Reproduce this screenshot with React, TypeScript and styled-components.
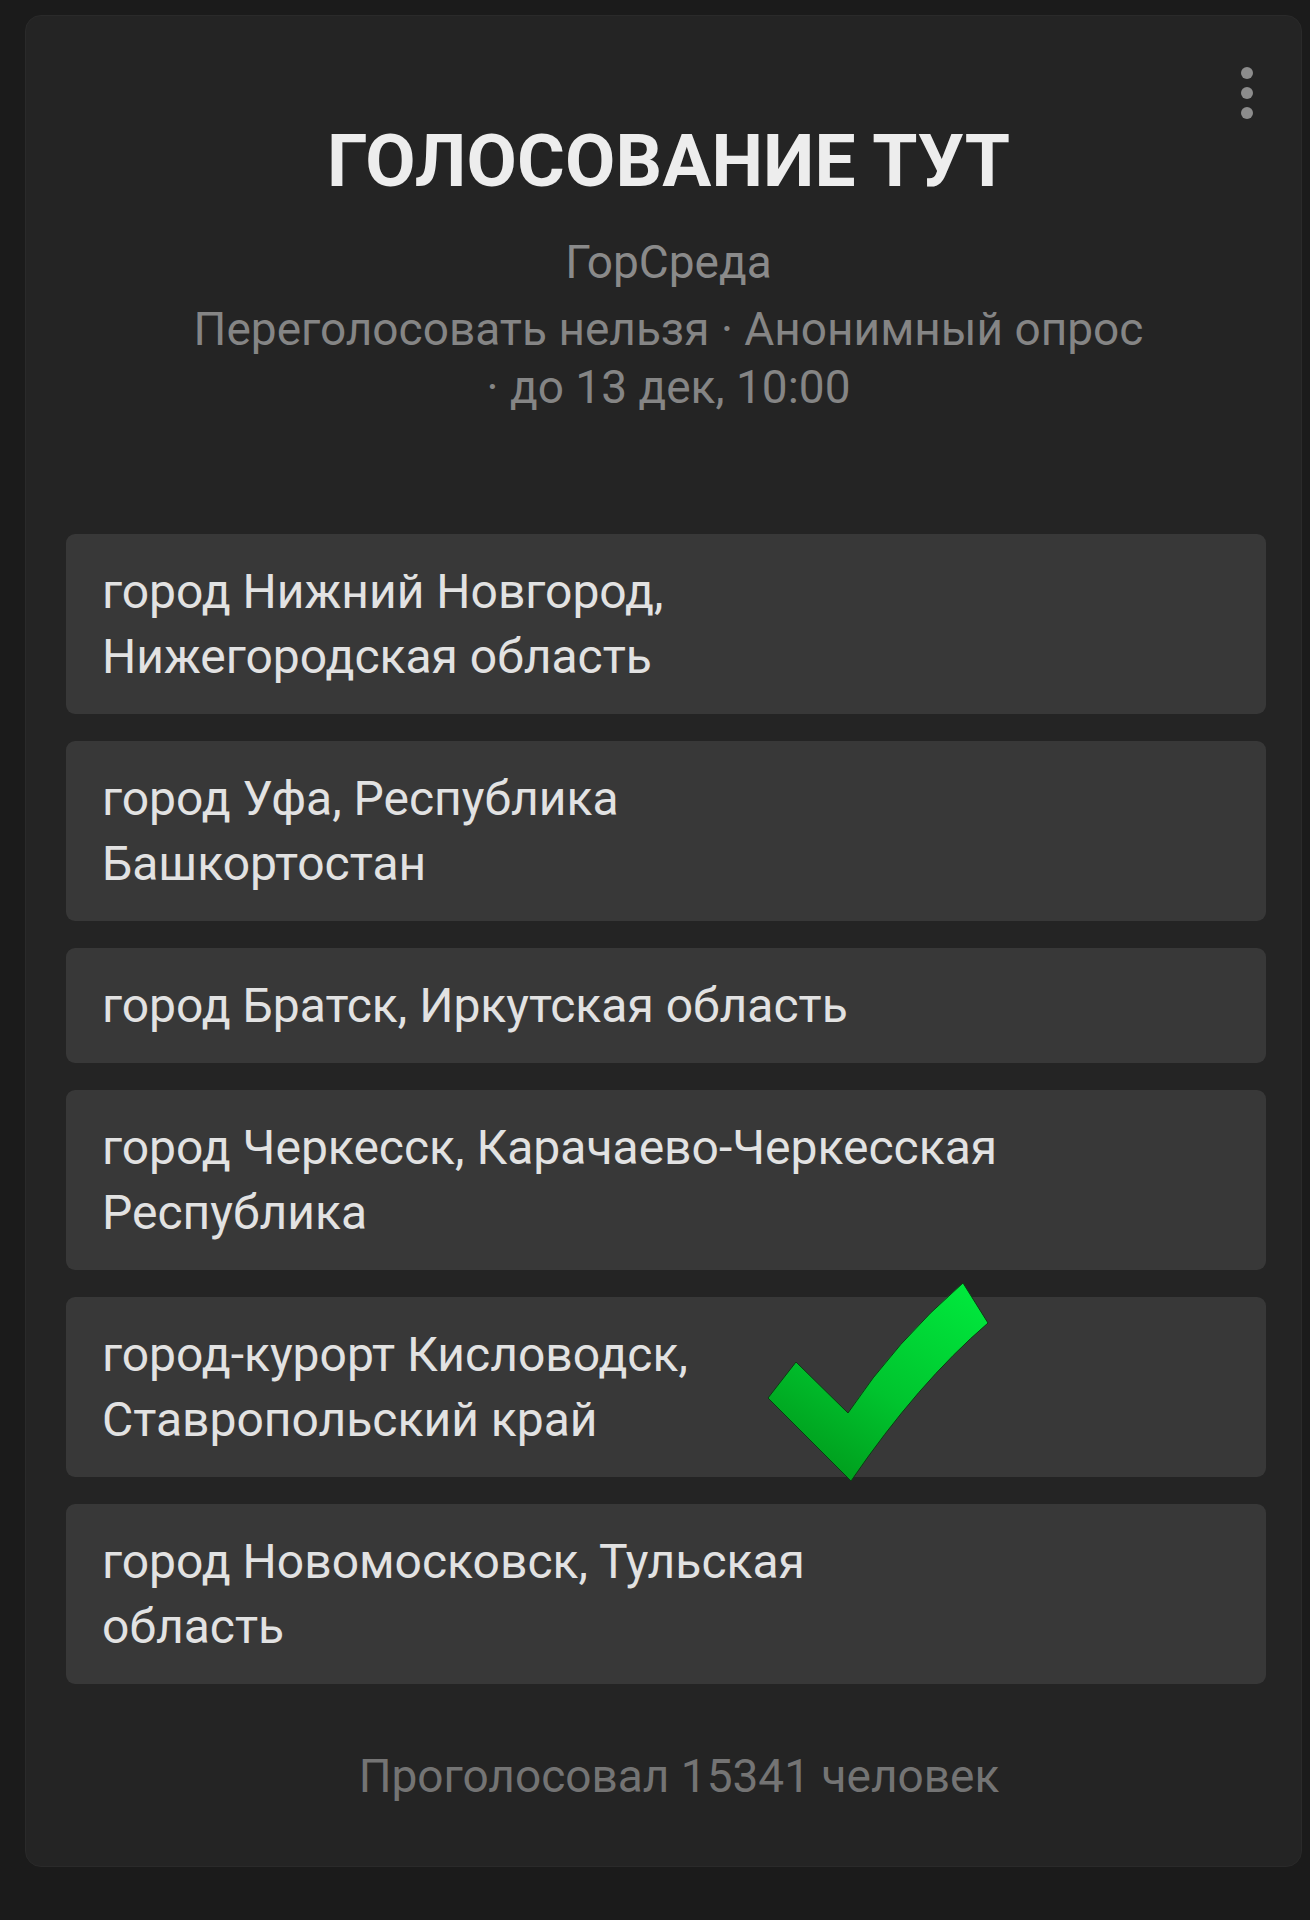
import React from "react";
import styled, { createGlobalStyle } from "styled-components";

const GlobalStyle = createGlobalStyle`
  html, body {
    margin: 0;
    padding: 0;
    background: #1b1b1b;
  }
  body {
    font-family: Roboto, "Noto Sans", "Liberation Sans", sans-serif;
    -webkit-font-smoothing: antialiased;
  }
`;

const Page = styled.div`
  width: 1310px;
  min-height: 1920px;
  box-sizing: border-box;
  padding: 15px 8px 0 25px;
  background: #1b1b1b;
`;

const Card = styled.section`
  position: relative;
  box-sizing: border-box;
  width: 1277px;
  padding: 101px 35px 58px 40px;
  background: #242424;
  border: 1px solid #2a2a2a;
  border-radius: 16px;
  display: flex;
  flex-direction: column;
`;

const Menu = styled.div`
  position: absolute;
  top: 51px;
  right: 48px;
  display: flex;
  flex-direction: column;
  gap: 8px;
`;

const Dot = styled.span`
  display: block;
  width: 12px;
  height: 12px;
  border-radius: 50%;
  background: #8c8c8c;
`;

const Header = styled.header`
  display: flex;
  flex-direction: column;
  align-items: center;
  text-align: center;
  padding-left: 5px;
`;

const Title = styled.h1`
  margin: 0;
  font-size: 73px;
  line-height: 88px;
  font-weight: 700;
  color: #ededed;
  letter-spacing: 0.2px;
`;

const Author = styled.div`
  margin-top: 28px;
  font-size: 46px;
  line-height: 58px;
  color: #8a8a8a;
`;

const Meta = styled.div`
  margin-top: 9px;
  font-size: 46px;
  line-height: 58px;
  color: #858585;
`;

const Line = styled.span`
  display: block;
  white-space: nowrap;
`;

const Options = styled.div`
  margin-top: 118px;
  display: flex;
  flex-direction: column;
  gap: 27px;
`;

const Option = styled.div`
  position: relative;
  padding: 25px 36px;
  background: #383838;
  border-radius: 9px;
  font-size: 48px;
  line-height: 65px;
  color: #e2e2e2;
`;

const Check = styled.svg`
  position: absolute;
  left: 702px;
  top: -14px;
  width: 220px;
  height: 198px;
  overflow: visible;
`;

const Footer = styled.div`
  margin-top: 60px;
  text-align: center;
  font-size: 46px;
  line-height: 64px;
  color: #747474;
  padding-left: 26px;
`;

type Item = { lines: string[]; checked?: boolean };

const items: Item[] = [
  { lines: ["город Нижний Новгород,", "Нижегородская область"] },
  { lines: ["город Уфа, Республика", "Башкортостан"] },
  { lines: ["город Братск, Иркутская область"] },
  { lines: ["город Черкесск, Карачаево-Черкесская", "Республика"] },
  { lines: ["город-курорт Кисловодск,", "Ставропольский край"], checked: true },
  { lines: ["город Новомосковск, Тульская", "область"] },
];

const CheckMark = () => (
  <Check viewBox="0 0 220 198">
    <defs>
      <linearGradient id="chk" x1="1" y1="0" x2="0.3" y2="1">
        <stop offset="0" stopColor="#00ec3e" />
        <stop offset="0.6" stopColor="#00c42e" />
        <stop offset="1" stopColor="#009c1c" />
      </linearGradient>
    </defs>
    <path
      d="M0 115 L28 79 L80 130 Q128 58 195 0 L220 40 Q150 100 83 198 Z"
      fill="url(#chk)"
      stroke="#0b3d12"
      strokeWidth="1"
      strokeLinejoin="round"
    />
  </Check>
);

export default function App() {
  return (
    <>
      <GlobalStyle />
      <Page>
        <Card>
          <Menu>
            <Dot />
            <Dot />
            <Dot />
          </Menu>
          <Header>
            <Title>ГОЛОСОВАНИЕ ТУТ</Title>
            <Author>ГорСреда</Author>
            <Meta>
              <Line>Переголосовать нельзя · Анонимный опрос</Line>
              <Line>· до 13 дек, 10:00</Line>
            </Meta>
          </Header>
          <Options>
            {items.map((it, i) => (
              <Option key={i}>
                {it.lines.map((l, j) => (
                  <Line key={j}>{l}</Line>
                ))}
                {it.checked && <CheckMark />}
              </Option>
            ))}
          </Options>
          <Footer>Проголосовал 15341 человек</Footer>
        </Card>
      </Page>
    </>
  );
}
